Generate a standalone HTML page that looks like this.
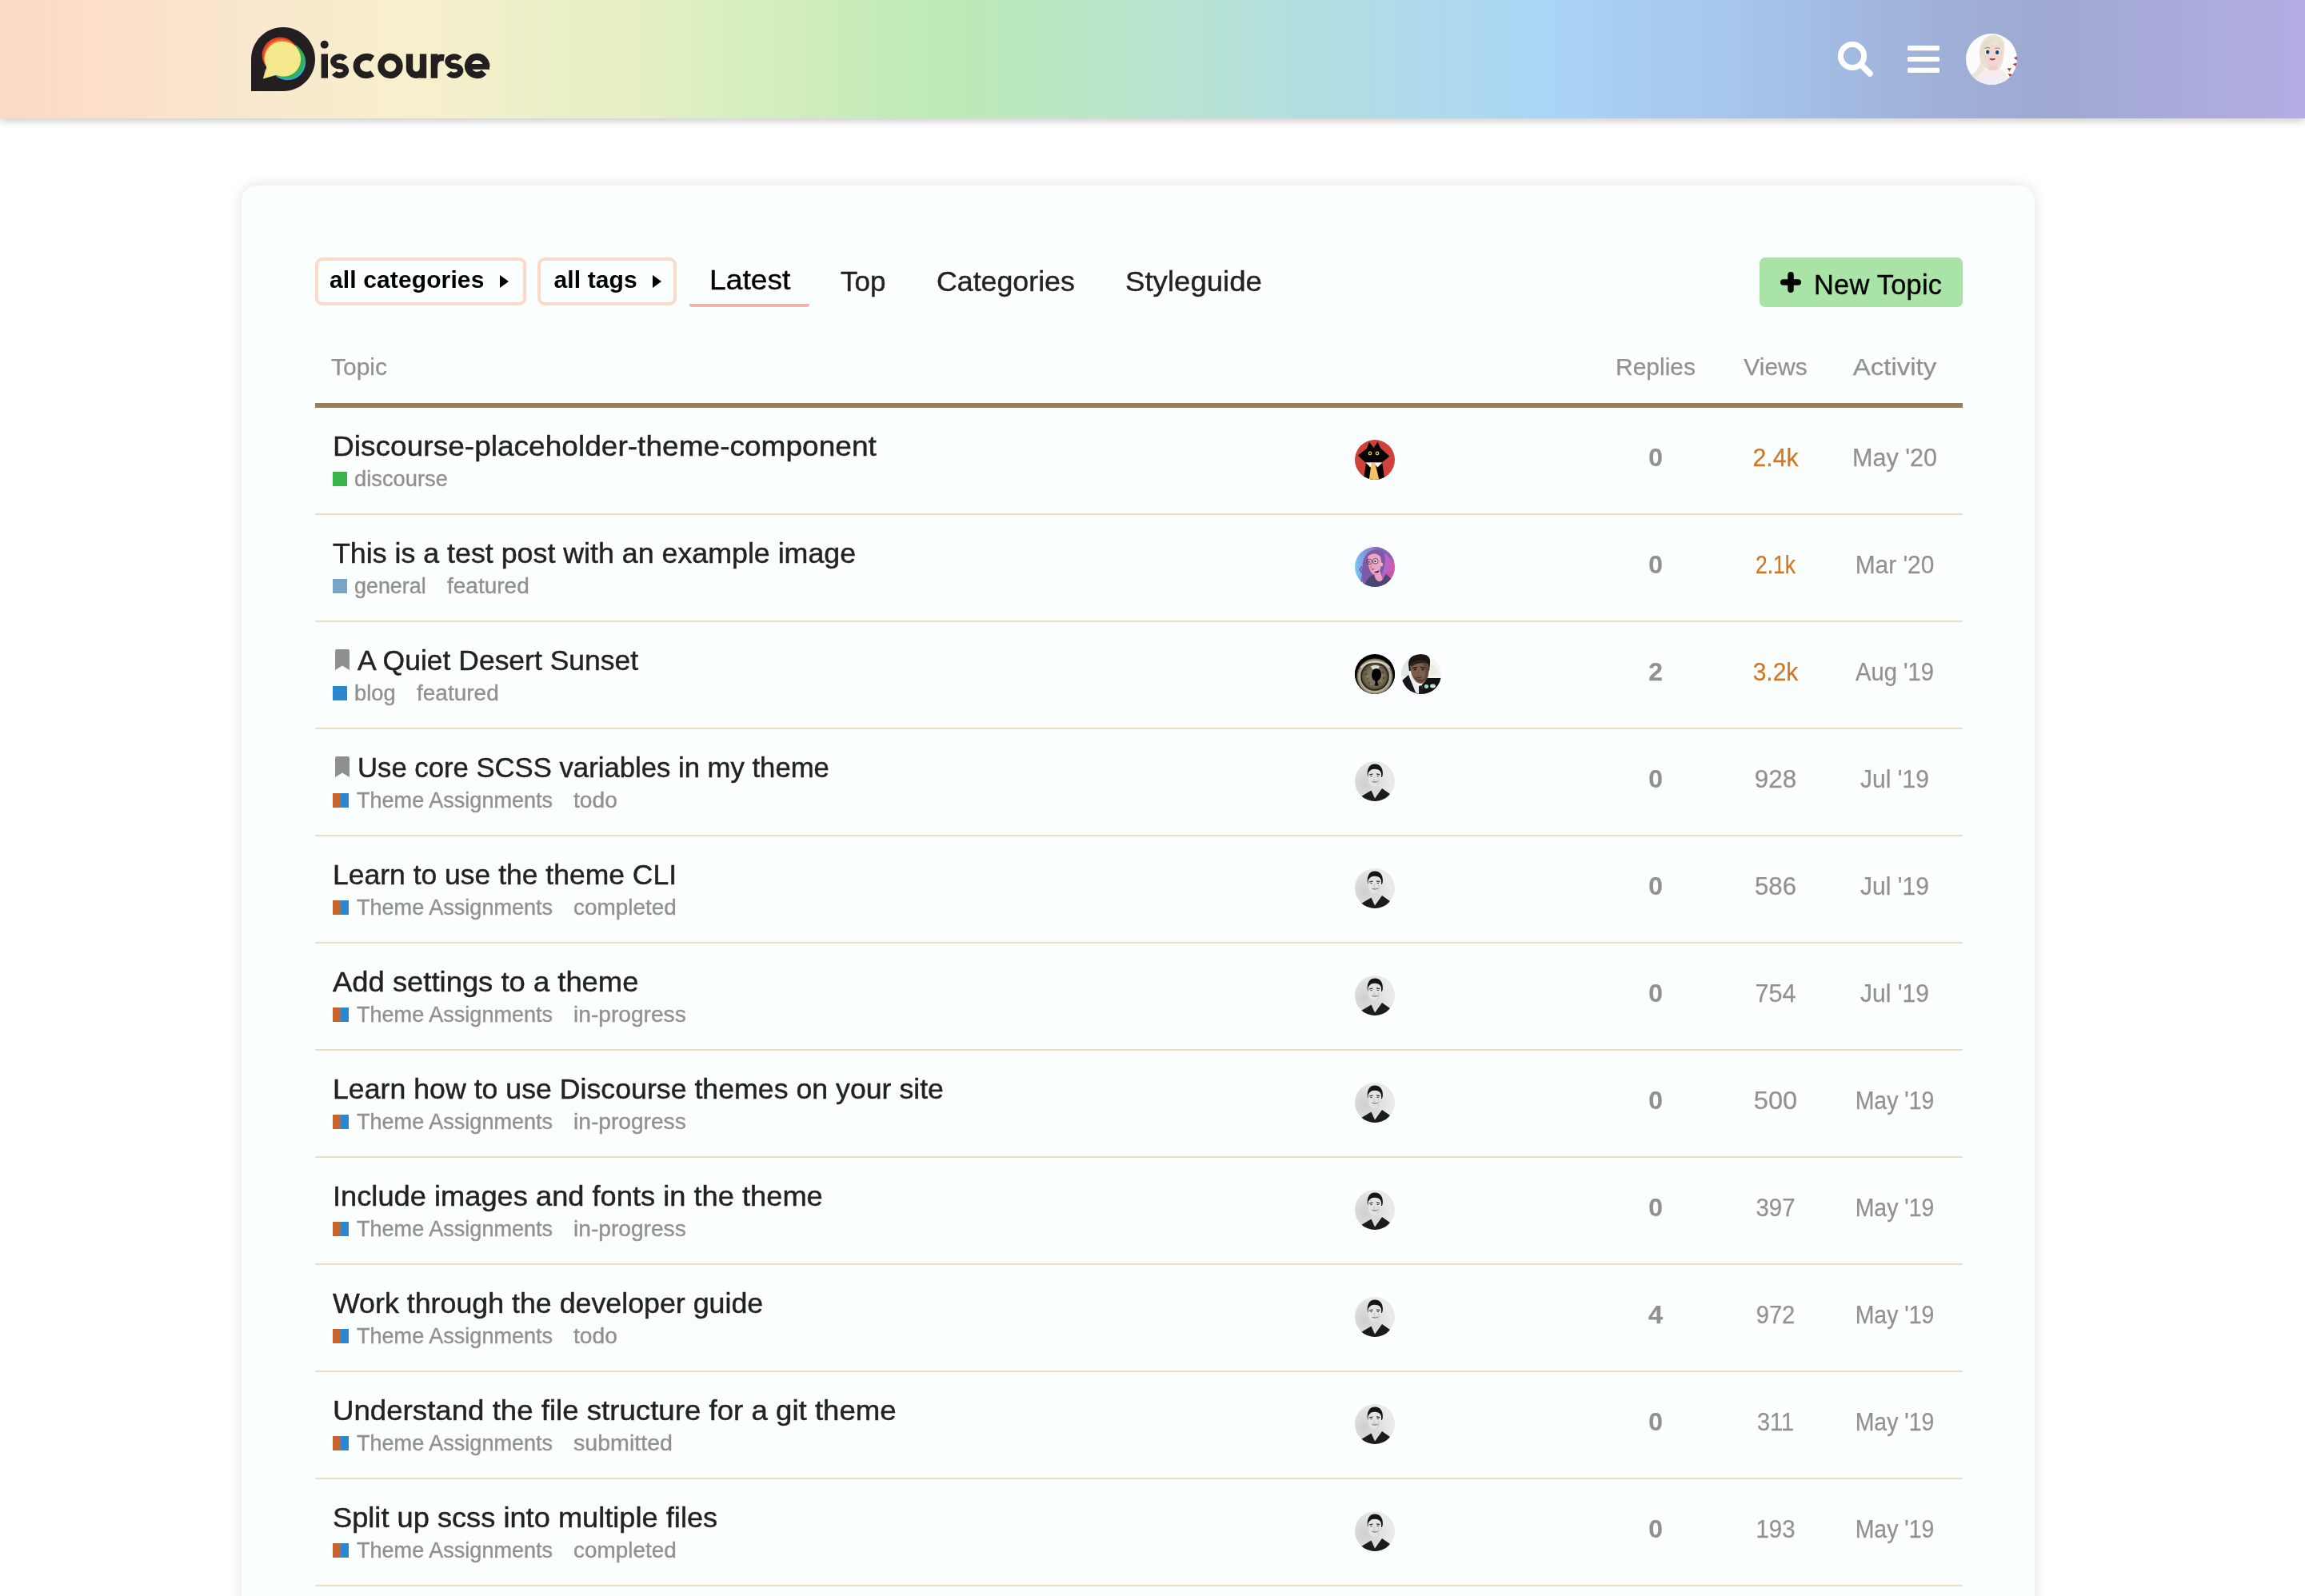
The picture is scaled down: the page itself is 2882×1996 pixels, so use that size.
<!DOCTYPE html>
<html lang="en">
<head>
<meta charset="utf-8">
<title>Discourse</title>
<style>
*{box-sizing:border-box;margin:0;padding:0}
html,body{width:2882px;height:1996px;overflow:hidden;background:#fff}
body{font-family:"Liberation Sans",sans-serif;color:#222;position:relative}
a{color:inherit;text-decoration:none}
.abs{position:absolute}
.row,nav,.th,header{will-change:transform}
/* ---------- header ---------- */
header{position:absolute;left:0;top:0;width:2882px;height:148px;z-index:5;
 background:linear-gradient(90deg,#fcd8c6 0%,#fae6cf 10%,#f7f0cc 18%,#e6f0c4 27%,#cfedba 35%,#bcebb6 41%,#b8e6cc 49%,#b2dde0 57%,#aad5f6 67%,#a5c4ea 76%,#9fb0d8 84%,#9fa8d1 89%,#b3ade3 100%);
 box-shadow:0 3px 10px rgba(0,0,0,.22)}
.logo{position:absolute;left:314px;top:34px;width:310px;height:80px}
.hicon{position:absolute}
/* ---------- card ---------- */
main{position:absolute;left:302px;top:232px;width:2242px;height:1800px;background:#fbfefe;border-radius:20px;
 box-shadow:0 0 18px rgba(0,0,0,.12)}
/* nav */
.pill{position:absolute;top:322px;height:60px;border:4px solid #fcdac7;border-radius:9px;
 font-weight:700;font-size:30px;line-height:52px;color:#000;white-space:nowrap}
.pill span{position:absolute;left:14px;top:-2px;letter-spacing:.12px}
.pill i{position:absolute;top:18px;width:0;height:0;border-left:11px solid #000;border-top:8.500px solid transparent;border-bottom:8.500px solid transparent}
.nav{position:absolute;font-size:35px;line-height:40px;color:#222;white-space:nowrap;transform-origin:0 50%;-webkit-text-stroke:.4px #222}
.uline{position:absolute;left:862px;top:380px;width:150px;height:4px;background:#eeb3ac;border-radius:0 0 3px 3px}
.btn{position:absolute;left:2200px;top:322px;width:254px;height:62px;border-radius:7px;background:#a9e3a6;color:#000;
 font-size:34.4px;line-height:40px;white-space:nowrap}
.btn span{position:absolute;left:68px;top:13.500px;letter-spacing:.25px;-webkit-text-stroke:.35px #000}
.btn svg{position:absolute;left:26px;top:18px}
/* table header */
.th{position:absolute;font-size:30px;line-height:34px;color:#919191;white-space:nowrap;-webkit-text-stroke:.25px #919191}
.th.c{transform:translateX(-50%)}
.rule{position:absolute;left:394px;top:504px;width:2060px;height:6px;background:#978056}
/* rows */
.row{position:absolute;left:394px;width:2060px;height:134px;border-bottom:2px solid #eae1c0}
.title{position:absolute;left:22px;top:26.500px;font-size:35px;line-height:42px;color:#222;white-space:nowrap;transform-origin:0 50%;-webkit-text-stroke:.45px #222}
.title.bm{left:53px}
.bmi{position:absolute;left:25px;top:34px}
.meta{position:absolute;left:22px;top:71.700px;height:34px;font-size:27px;line-height:34px;color:#919191;white-space:nowrap;-webkit-text-stroke:.4px #919191}
.sq{position:absolute;left:0;top:8.500px;width:18px;height:18px}
.sq2{position:absolute;left:0;top:8.500px;width:20px;height:18px;background:linear-gradient(90deg,#c8652f 0 50%,#2b87cf 50% 100%)}
.cat{position:absolute;top:0;transform-origin:0 50%}
.tag{position:absolute;top:0;transform-origin:0 50%}
.av{position:absolute;top:40px;width:50px;height:50px;border-radius:50%;overflow:hidden}
.num{position:absolute;top:38px;font-size:31px;line-height:50px;color:#919191;white-space:nowrap;transform:translateX(-50%);-webkit-text-stroke:.25px #919191}
.num.b{font-weight:700;left:1676px}
.num.v{left:1826px}
.num.a{left:1975px}
.hot{color:#cf7721;-webkit-text-stroke-color:#cf7721}
</style>
</head>
<body>
<header>
 <a class="logo" href="#">
  <svg width="310" height="80" viewBox="0 0 310 80">
   <path d="M0 40C0 17.900 17.900 0 40 0s40 17.900 40 40-17.900 40-40 40H0z" fill="#231f20"/>
   <circle cx="45.600" cy="43.700" r="22.600" fill="#27a9e1"/>
   <circle cx="44.200" cy="41.600" r="22.500" fill="#35b04a"/>
   <circle cx="36.300" cy="35.200" r="22.600" fill="#e8402a"/>
   <path d="M14.200 40l3.500 12-3 12.500 6-2z" fill="#e8402a"/>
   <circle cx="38.200" cy="37.400" r="22.200" fill="#f0772b"/>
   <path d="M40.200 17.900a21.900 21.900 0 0 1 3 43.600c-4 .5-8-.2-11.500-1.800L15 64.500l4.400-14.500A21.900 21.900 0 0 1 40.200 17.900z" fill="#f3e88b"/>
   <g fill="none" stroke="#231f20" stroke-width="8.400" aria-label="iscourse">
    <circle cx="91.700" cy="21.800" r="5" fill="#231f20" stroke="none"/>
    <path d="M91.800 33.500V63.700"/>
    <path id="ls" d="M117.54 39.90A7.9 5.80 0 1 0 110.70 48.60A7.9 5.80 0 1 1 103.86 57.30" stroke-width="7.400"/>
    <path d="M151.800 39.200A12.600 11.500 0 1 0 151.800 57.800"/>
    <circle cx="174" cy="48.500" r="11.500"/>
    <path d="M198 33.500V51.300A8.500 8.500 0 0 0 215 51.300M215 33.500V63.700"/>
    <path d="M228.900 33.500V63.700M228.900 50C228.900 41.500 233.500 37 241.200 38.300"/>
    <use href="#ls" x="143.200"/>
    <path d="M272 49.400H297.600" stroke-width="6.800"/>
    <path d="M293.60 51.86A11.5 11.5 0 1 0 291.15 56.20"/>
   </g>
  </svg>
 </a>
 <svg class="hicon" style="left:2296px;top:50px" width="48" height="48" viewBox="0 0 48 48">
  <circle cx="20" cy="20" r="14.600" fill="none" stroke="#fff" stroke-width="7"/>
  <path d="M31 31L42 42" stroke="#fff" stroke-width="7.500" stroke-linecap="round"/>
 </svg>
 <svg class="hicon" style="left:2385px;top:57px" width="40" height="34" viewBox="0 0 40 34">
  <rect x="0" y="0" width="40" height="6.200" rx="1.500" fill="#fff"/>
  <rect x="0" y="13.900" width="40" height="6.200" rx="1.500" fill="#fff"/>
  <rect x="0" y="27.800" width="40" height="6.200" rx="1.500" fill="#fff"/>
 </svg>
 <svg class="hicon" style="left:2458px;top:42px" width="64" height="64" viewBox="0 0 64 64">
  <defs><clipPath id="cu"><circle cx="32" cy="32" r="32"/></clipPath></defs>
  <g clip-path="url(#cu)">
   <rect width="64" height="64" fill="#fcfbfd"/>
   <path d="M17 27c-1-14 6-25 18-25 10 0 15 8 13 20l-2 14-4 8H24c-4-4-6-9-7-17z" fill="#e9e2d2"/>
   <path d="M19 34c1 6 3 10 6 13-4 4-10 8-18 10l-3-5c7-2 12-8 15-18z" fill="#ebe5d8"/>
   <path d="M22 23c3-8 11-11 20-8 3 4 4 10 3 15-1 6-5 11-11 12-6-1-11-7-12-19z" fill="#f2d6d2"/>
   <path d="M18 25c1-12 9-20 20-18-7 2-11 7-13 13-1 4-4 6-7 5z" fill="#e5dcc6"/>
   <path d="M38 7c6 1 10 7 9 15-2-6-5-11-9-15z" fill="#e5dcc6"/>
   <ellipse cx="26.800" cy="22.600" rx="3" ry="3.300" fill="#fff"/><ellipse cx="39.600" cy="23" rx="3" ry="3.300" fill="#fff"/>
   <ellipse cx="27.200" cy="23" rx="2.300" ry="2.700" fill="#2b6a86"/><ellipse cx="39.200" cy="23.400" rx="2.300" ry="2.700" fill="#2b6a86"/>
   <circle cx="27.200" cy="23.200" r="1.100" fill="#13232e"/><circle cx="39.200" cy="23.600" r="1.100" fill="#13232e"/>
   <path d="M23.500 18.500q3-2 6.500-.5M36.500 18.500q3-1.500 6 .5" stroke="#9a7b62" stroke-width="1" fill="none"/>
   <path d="M30 31.500q3 2.600 6.500 0q-3 .6-6.500 0z" fill="#a8384e" stroke="#a8384e" stroke-width="1.200" stroke-linejoin="round"/>
   <path d="M28 37l5 4 6-3 2 8-14 1z" fill="#eed0cc"/>
   <path d="M11 64c1-11 8-17 16-19l7 2 8-3c7 3 11 10 12 20z" fill="#f5eaee"/>
   <path d="M14 64c2-7 9-11 19-11s16 4 18 11z" fill="#efeef5"/>
   <path d="M60 30.500l4.500-2.500.5 6zM58.500 38l5.500-1.500-1.500 4.500zM51.500 43.500l5.500-.5-2.500 4zM52.500 50l6 1-3.500 3z" fill="#b23b26"/>
  </g>
 </svg>
</header>
<main></main>
<nav>
 <a class="pill" href="#" style="left:394px;width:264px"><span>all categories</span><i style="left:227px"></i></a>
 <a class="pill" href="#" style="left:672px;width:174px"><span style="left:16.500px">all tags</span><i style="left:140px"></i></a>
 <a class="nav active" href="#" style="left:887px;top:330px;color:#000;-webkit-text-stroke-color:#000;transform:scaleX(1.064)">Latest</a><span class="uline"></span>
 <a class="nav" href="#" style="left:1051px;top:332px">Top</a>
 <a class="nav" href="#" style="left:1171px;top:332px;transform:scaleX(1.021)">Categories</a>
 <a class="nav" href="#" style="left:1407px;top:332px;transform:scaleX(1.046)">Styleguide</a>
 <a class="btn" href="#"><svg width="26" height="26" viewBox="0 0 26 26"><path d="M13 3.750v18.500M3.750 13h18.500" stroke="#000" stroke-width="7.500" stroke-linecap="round"/></svg><span>New Topic</span></a>
</nav>
<div class="th" style="left:414px;top:442px">Topic</div>
<div class="th c" style="left:2070px;top:442px">Replies</div>
<div class="th c" style="left:2220px;top:442px">Views</div>
<div class="th c" style="left:2369px;top:442px;transform:translateX(-50%) scaleX(1.1)">Activity</div>
<div class="rule"></div>
<!--ROWS-START-->
<article class="row" style="top:510px">
<a class="title" href="#" style="transform:scaleX(1.059)">Discourse-placeholder-theme-component</a>
<div class="meta">
<span class="sq" style="background:#3ab54a"></span>
<span class="cat" style="left:27.4px;transform:scaleX(1.012)">discourse</span>
</div>
<span class="av" style="left:1300px"><svg width="50" height="50" viewBox="0 0 50 50"><rect width="50" height="50" fill="#cf4139"/><path d="M10.900 50L13.800 29.500h20.600L37.300 50z" fill="#050505"/><path d="M13.400 28.200h21l-6 6.400-4.400-5.200-4.300 5.400z" fill="#fff"/><path d="M20.800 29h4.400l5.200 21H17.800z" fill="#f5c363"/><path d="M3.800 19.400L15 10.800l2.900-8 5.800 7.200 4.700-7.600 3.600 7.800 11.300 10.600-9.300 7.400H13z" fill="#050505"/><circle cx="19" cy="16.900" r="2.300" fill="#f3cf5b"/><circle cx="28" cy="16.900" r="2.300" fill="#f3cf5b"/><circle cx="19" cy="16.900" r="1.100" fill="#050505"/><circle cx="28" cy="16.900" r="1.100" fill="#050505"/></svg></span>
<span class="num b" style="transform:translateX(-50%) scaleX(1.026)">0</span>
<span class="num v hot" style="transform:translateX(-50%) scaleX(0.976)">2.4k</span>
<span class="num a" style="transform:translateX(-50%) scaleX(0.985)">May '20</span>
</article>
<article class="row" style="top:644px">
<a class="title" href="#" style="transform:scaleX(1.022)">This is a test post with an example image</a>
<div class="meta">
<span class="sq" style="background:#7aa3c9"></span>
<span class="cat" style="left:27.4px;transform:scaleX(0.995)">general</span>
<span class="tag" style="left:142.5px;transform:scaleX(1.037)">featured</span>
</div>
<span class="av" style="left:1300px"><svg width="50" height="50" viewBox="0 0 50 50"><defs><linearGradient id="pg1" x1="0" y1="0" x2="1" y2="0"><stop offset="0" stop-color="#79c8f0"/><stop offset=".28" stop-color="#8093dc"/><stop offset=".55" stop-color="#9a72c4"/><stop offset=".8" stop-color="#b866c8"/><stop offset="1" stop-color="#d9559f"/></linearGradient></defs><rect width="50" height="50" fill="url(#pg1)"/><path d="M22 0h28v20c-8-9-17-16-28-20z" fill="#7a63b6" opacity=".85"/><path d="M36 34l14-6v22H30z" fill="#d2529e" opacity=".75"/><path d="M15 9c4-6 14-8 20-3 4 4 3 12 2 18l-5 18-20 8c-3-5-3-10-1-16-3-3-3-7-1-10-1-5 2-11 5-15z" fill="#7d5aa6"/><path d="M9 24l-3 4 4 6-2 10" stroke="#6d5fb0" stroke-width="1.600" fill="none"/><path d="M16.500 11.500c5-4 12-4 15.500 1 2 6 1 13-1.500 18l-8 3.500c-4-3-7-12-6-22.500z" fill="#eaa5c2"/><path d="M24 31l7-2.500c1 4 3 9 4 13l-9 3c-3-4-3.500-9-2-13.500z" fill="#ee9fc0"/><path d="M24 31.800l6.500-2.600-1.200 2.600q-2.500 1-5.300 0z" fill="#2a1830"/><path d="M12 50c1-8 5-13 12.500-15.500 0 5 3.500 9 7.500 9 3-2.500 5.500-6 6.500-9.500 4 2 7 6 8 10l-6 6z" fill="#4a4773"/><circle cx="18.300" cy="18.500" r="3.200" fill="none" stroke="#5a3458" stroke-width=".9"/><circle cx="25.800" cy="17.800" r="3.300" fill="#f1cfe2" stroke="#5a3458" stroke-width=".9"/><circle cx="25.400" cy="18" r="1.200" fill="#35304a"/><circle cx="17.800" cy="18.800" r="1" fill="#35304a"/><path d="M21 22.500l-1.300 3 2 .6" stroke="#c06a93" stroke-width=".8" fill="none"/><path d="M20.800 28q1.800.6 3.400-.4" stroke="#7a3050" stroke-width=".9" fill="none"/><ellipse cx="33.500" cy="22" rx="1.600" ry="2.400" fill="#f3b4cf"/></svg></span>
<span class="num b" style="transform:translateX(-50%) scaleX(1.026)">0</span>
<span class="num v hot" style="transform:translateX(-50%) scaleX(0.853)">2.1k</span>
<span class="num a" style="transform:translateX(-50%) scaleX(0.963)">Mar '20</span>
</article>
<article class="row" style="top:778px">
<svg class="bmi" width="18" height="26" viewBox="0 0 18 26"><path d="M0 26V2.400A2.400 2.400 0 0 1 2.400 0h13.200A2.400 2.400 0 0 1 18 2.400V26l-9-5.600z" fill="#8f8f8f"/></svg>
<a class="title bm" href="#" style="transform:scaleX(1.014)">A Quiet Desert Sunset</a>
<div class="meta">
<span class="sq" style="background:#2b87cf"></span>
<span class="cat" style="left:27.4px;transform:scaleX(1.011)">blog</span>
<span class="tag" style="left:104.5px;transform:scaleX(1.037)">featured</span>
</div>
<span class="av" style="left:1300px"><svg width="50" height="50" viewBox="0 0 50 50"><defs><radialGradient id="eg2" cx=".5" cy=".53" r=".5"><stop offset="0" stop-color="#8e866f"/><stop offset=".4" stop-color="#787059"/><stop offset=".6" stop-color="#5c5542"/><stop offset=".67" stop-color="#1a140b"/><stop offset=".73" stop-color="#bdb7a3"/><stop offset=".8" stop-color="#a39c86"/><stop offset=".86" stop-color="#6d6652"/><stop offset=".9" stop-color="#0a0805"/><stop offset="1" stop-color="#000"/></radialGradient></defs><rect width="50" height="50" fill="#000"/><circle cx="25" cy="26.500" r="25.500" fill="url(#eg2)"/><path d="M7.500 17c7-9 28-10 36 0" stroke="#dcd8cb" stroke-width="2.400" fill="none" opacity=".8"/><path d="M20 15.500c3-2 8-2 11 0l-2 3.500h-7z" fill="#ecebe4" opacity=".9"/><g fill="#3d3424" opacity=".55"><circle cx="14" cy="25" r="1.300"/><circle cx="16" cy="31" r="1.100"/><circle cx="35" cy="23" r="1.200"/><circle cx="36" cy="30" r="1.300"/><circle cx="31" cy="36" r="1.100"/><circle cx="18" cy="36" r="1.200"/><circle cx="13" cy="20" r="1"/></g><g fill="#b9ad8a" opacity=".5"><circle cx="15.500" cy="28" r="1"/><circle cx="34" cy="27" r="1"/><circle cx="33" cy="34" r=".9"/><circle cx="20" cy="38" r=".9"/><circle cx="37" cy="26" r=".8"/></g><path d="M27 18c3.800 0 6.500 3.600 6 8.400-.4 4.200-3.300 5.600-4.700 7.900l1.300 5.200h-4.800l.8-5.200c-2.900-1.800-4.800-4.700-4.500-8.400.3-4.700 2.500-7.900 5.900-7.900z" fill="#020202"/></svg></span>
<span class="av" style="left:1358px"><svg width="50" height="50" viewBox="0 0 50 50"><rect width="50" height="50" fill="#f5f5f1"/><rect x="0" y="6" width="10" height="22" fill="#e5e5e8"/><path d="M36 12c6 1 10 6 11 12l-10 4z" fill="#ecece6"/><path d="M30 30h20v20H30z" fill="#101415"/><path d="M9 13c0-9 6-13 15-13 8 0 13 3 12 12l-1 9H10z" fill="#1a1613"/><path d="M11.500 14c2-4 7.500-6 13.500-5.500 6 .2 9.500 3 9.500 9 0 8-2 14.500-6.500 18.500-3 2-8 1-11-3-4-5-6-12-5.500-19z" fill="#7d5e4e"/><path d="M11.500 14c2-4 7.500-6 13.500-5.500 4 .2 7 1.500 8.500 4-6-2-15-2-20 3z" fill="#2a211c"/><path d="M14 17.500l6-1M24 16.500l6 .7" stroke="#2c201a" stroke-width="1.300"/><ellipse cx="17.300" cy="19.500" rx="1.800" ry=".9" fill="#2a1d17"/><ellipse cx="27" cy="19.500" rx="1.800" ry=".9" fill="#2a1d17"/><path d="M28 12c5 3 6 12 2 21" stroke="#4d382d" stroke-width="4" fill="none" opacity=".6"/><path d="M22 20l-1.500 6 3 .8" stroke="#6e5140" stroke-width="1" fill="none"/><path d="M15 26c2 6 6 9 9 9 3 0 5-2 6.500-5-2 1-4 1.500-7 1.500s-6-2-8.500-5.500z" fill="#5b4335"/><path d="M19 29q3 1.200 6.500 0" stroke="#3d2a20" stroke-width="1" fill="none"/><path d="M0 34l9-8 11 14 4 10H0z" fill="#14161a"/><path d="M9 26l5 4 10 12-2 8-4-2z" fill="#e9eaf2"/><path d="M22 40l4-1 2 11h-6z" fill="#1a1c22"/><path d="M26 38l6-6 8 3 10-2v17H27z" fill="#111315"/><ellipse cx="31.500" cy="40.500" rx="2.600" ry="2.400" fill="#9fd9cc"/><ellipse cx="39.500" cy="40" rx="3.400" ry="2.400" fill="#bfe9de"/></svg></span>
<span class="num b" style="transform:translateX(-50%) scaleX(1.026)">2</span>
<span class="num v hot" style="transform:translateX(-50%) scaleX(0.966)">3.2k</span>
<span class="num a" style="transform:translateX(-50%) scaleX(0.941)">Aug '19</span>
</article>
<article class="row" style="top:912px">
<svg class="bmi" width="18" height="26" viewBox="0 0 18 26"><path d="M0 26V2.400A2.400 2.400 0 0 1 2.400 0h13.200A2.400 2.400 0 0 1 18 2.400V26l-9-5.600z" fill="#8f8f8f"/></svg>
<a class="title bm" href="#" style="transform:scaleX(0.991)">Use core SCSS variables in my theme</a>
<div class="meta">
<span class="sq2"></span>
<span class="cat" style="left:30.4px;transform:scaleX(1.002)">Theme Assignments</span>
<span class="tag" style="left:300.9px;transform:scaleX(1.043)">todo</span>
</div>
<span class="av" style="left:1300px"><svg width="50" height="50" viewBox="0 0 50 50"><defs><radialGradient id="mg3" cx=".25" cy=".58" r=".62"><stop offset="0" stop-color="#cfcfd1"/><stop offset="1" stop-color="#e9e9ea"/></radialGradient></defs><rect width="50" height="50" fill="url(#mg3)"/><path d="M15.900 18.500c-1.200-9 2.400-15 9.100-15 7 0 10.800 5.500 9.700 14.500l-1 2-16.800-.3z" fill="#151515"/><path d="M16.800 14.500c2-4 5.500-5.200 8.700-4.800 4 .3 7 2 7.500 6 .5 6-1 12-4 15.500-2 2-5.500 2.500-8 .5-3.500-3.500-5.200-10.200-4.200-17.200z" fill="#e3e3e3"/><path d="M18.300 16.900l4.300-.9M27 15.900l4.200.7" stroke="#2c2c2c" stroke-width="1.200"/><ellipse cx="20.600" cy="18.600" rx="1.400" ry=".7" fill="#444"/><ellipse cx="28.800" cy="18.400" rx="1.400" ry=".7" fill="#444"/><path d="M24.600 19.500l-.8 4 2 .4" stroke="#bdbdbd" stroke-width=".9" fill="none"/><path d="M21.300 25.300q3.700 2.600 8-.3q-3.800 1-8 .3z" fill="#9a9a9a" stroke="#8a8a8a" stroke-width=".7"/><path d="M29 21q3 4-1 9" stroke="#cfcfcf" stroke-width="1.400" fill="none"/><path d="M21 30c2 2 5 2 7.500-.5l2.500 6-6 8-6.500-8z" fill="#dadada"/><path d="M8 44l12.500-7.500 4.500 10 9-12.500 10 7-6 7-13 3-12-3z" fill="#1c1c1c"/></svg></span>
<span class="num b" style="transform:translateX(-50%) scaleX(1.026)">0</span>
<span class="num v" style="transform:translateX(-50%) scaleX(1.017)">928</span>
<span class="num a" style="transform:translateX(-50%) scaleX(0.97)">Jul '19</span>
</article>
<article class="row" style="top:1046px">
<a class="title" href="#" style="transform:scaleX(1.014)">Learn to use the theme CLI</a>
<div class="meta">
<span class="sq2"></span>
<span class="cat" style="left:30.4px;transform:scaleX(1.002)">Theme Assignments</span>
<span class="tag" style="left:300.9px;transform:scaleX(1.033)">completed</span>
</div>
<span class="av" style="left:1300px"><svg width="50" height="50" viewBox="0 0 50 50"><defs><radialGradient id="mg4" cx=".25" cy=".58" r=".62"><stop offset="0" stop-color="#cfcfd1"/><stop offset="1" stop-color="#e9e9ea"/></radialGradient></defs><rect width="50" height="50" fill="url(#mg4)"/><path d="M15.900 18.500c-1.200-9 2.400-15 9.100-15 7 0 10.800 5.500 9.700 14.500l-1 2-16.800-.3z" fill="#151515"/><path d="M16.800 14.500c2-4 5.500-5.200 8.700-4.800 4 .3 7 2 7.500 6 .5 6-1 12-4 15.500-2 2-5.500 2.500-8 .5-3.500-3.500-5.200-10.200-4.200-17.200z" fill="#e3e3e3"/><path d="M18.300 16.900l4.300-.9M27 15.900l4.200.7" stroke="#2c2c2c" stroke-width="1.200"/><ellipse cx="20.600" cy="18.600" rx="1.400" ry=".7" fill="#444"/><ellipse cx="28.800" cy="18.400" rx="1.400" ry=".7" fill="#444"/><path d="M24.600 19.500l-.8 4 2 .4" stroke="#bdbdbd" stroke-width=".9" fill="none"/><path d="M21.300 25.300q3.700 2.600 8-.3q-3.800 1-8 .3z" fill="#9a9a9a" stroke="#8a8a8a" stroke-width=".7"/><path d="M29 21q3 4-1 9" stroke="#cfcfcf" stroke-width="1.400" fill="none"/><path d="M21 30c2 2 5 2 7.500-.5l2.500 6-6 8-6.500-8z" fill="#dadada"/><path d="M8 44l12.500-7.500 4.500 10 9-12.500 10 7-6 7-13 3-12-3z" fill="#1c1c1c"/></svg></span>
<span class="num b" style="transform:translateX(-50%) scaleX(1.026)">0</span>
<span class="num v" style="transform:translateX(-50%) scaleX(1.005)">586</span>
<span class="num a" style="transform:translateX(-50%) scaleX(0.97)">Jul '19</span>
</article>
<article class="row" style="top:1180px">
<a class="title" href="#" style="transform:scaleX(1.04)">Add settings to a theme</a>
<div class="meta">
<span class="sq2"></span>
<span class="cat" style="left:30.4px;transform:scaleX(1.002)">Theme Assignments</span>
<span class="tag" style="left:300.9px;transform:scaleX(1.042)">in-progress</span>
</div>
<span class="av" style="left:1300px"><svg width="50" height="50" viewBox="0 0 50 50"><defs><radialGradient id="mg5" cx=".25" cy=".58" r=".62"><stop offset="0" stop-color="#cfcfd1"/><stop offset="1" stop-color="#e9e9ea"/></radialGradient></defs><rect width="50" height="50" fill="url(#mg5)"/><path d="M15.900 18.500c-1.200-9 2.400-15 9.100-15 7 0 10.800 5.500 9.700 14.500l-1 2-16.800-.3z" fill="#151515"/><path d="M16.800 14.500c2-4 5.500-5.200 8.700-4.800 4 .3 7 2 7.500 6 .5 6-1 12-4 15.500-2 2-5.500 2.500-8 .5-3.500-3.500-5.200-10.200-4.200-17.200z" fill="#e3e3e3"/><path d="M18.300 16.900l4.300-.9M27 15.900l4.200.7" stroke="#2c2c2c" stroke-width="1.200"/><ellipse cx="20.600" cy="18.600" rx="1.400" ry=".7" fill="#444"/><ellipse cx="28.800" cy="18.400" rx="1.400" ry=".7" fill="#444"/><path d="M24.600 19.500l-.8 4 2 .4" stroke="#bdbdbd" stroke-width=".9" fill="none"/><path d="M21.300 25.300q3.700 2.600 8-.3q-3.800 1-8 .3z" fill="#9a9a9a" stroke="#8a8a8a" stroke-width=".7"/><path d="M29 21q3 4-1 9" stroke="#cfcfcf" stroke-width="1.400" fill="none"/><path d="M21 30c2 2 5 2 7.500-.5l2.500 6-6 8-6.500-8z" fill="#dadada"/><path d="M8 44l12.500-7.500 4.500 10 9-12.500 10 7-6 7-13 3-12-3z" fill="#1c1c1c"/></svg></span>
<span class="num b" style="transform:translateX(-50%) scaleX(1.026)">0</span>
<span class="num v" style="transform:translateX(-50%) scaleX(0.986)">754</span>
<span class="num a" style="transform:translateX(-50%) scaleX(0.97)">Jul '19</span>
</article>
<article class="row" style="top:1314px">
<a class="title" href="#" style="transform:scaleX(1.02)">Learn how to use Discourse themes on your site</a>
<div class="meta">
<span class="sq2"></span>
<span class="cat" style="left:30.4px;transform:scaleX(1.002)">Theme Assignments</span>
<span class="tag" style="left:300.9px;transform:scaleX(1.042)">in-progress</span>
</div>
<span class="av" style="left:1300px"><svg width="50" height="50" viewBox="0 0 50 50"><defs><radialGradient id="mg6" cx=".25" cy=".58" r=".62"><stop offset="0" stop-color="#cfcfd1"/><stop offset="1" stop-color="#e9e9ea"/></radialGradient></defs><rect width="50" height="50" fill="url(#mg6)"/><path d="M15.900 18.500c-1.200-9 2.400-15 9.100-15 7 0 10.800 5.500 9.700 14.500l-1 2-16.800-.3z" fill="#151515"/><path d="M16.800 14.500c2-4 5.500-5.200 8.700-4.800 4 .3 7 2 7.500 6 .5 6-1 12-4 15.500-2 2-5.500 2.500-8 .5-3.500-3.500-5.200-10.200-4.200-17.200z" fill="#e3e3e3"/><path d="M18.300 16.900l4.300-.9M27 15.900l4.200.7" stroke="#2c2c2c" stroke-width="1.200"/><ellipse cx="20.600" cy="18.600" rx="1.400" ry=".7" fill="#444"/><ellipse cx="28.800" cy="18.400" rx="1.400" ry=".7" fill="#444"/><path d="M24.600 19.500l-.8 4 2 .4" stroke="#bdbdbd" stroke-width=".9" fill="none"/><path d="M21.300 25.300q3.700 2.600 8-.3q-3.800 1-8 .3z" fill="#9a9a9a" stroke="#8a8a8a" stroke-width=".7"/><path d="M29 21q3 4-1 9" stroke="#cfcfcf" stroke-width="1.400" fill="none"/><path d="M21 30c2 2 5 2 7.500-.5l2.500 6-6 8-6.500-8z" fill="#dadada"/><path d="M8 44l12.500-7.500 4.500 10 9-12.500 10 7-6 7-13 3-12-3z" fill="#1c1c1c"/></svg></span>
<span class="num b" style="transform:translateX(-50%) scaleX(1.026)">0</span>
<span class="num v" style="transform:translateX(-50%) scaleX(1.053)">500</span>
<span class="num a" style="transform:translateX(-50%) scaleX(0.917)">May '19</span>
</article>
<article class="row" style="top:1448px">
<a class="title" href="#" style="transform:scaleX(1.036)">Include images and fonts in the theme</a>
<div class="meta">
<span class="sq2"></span>
<span class="cat" style="left:30.4px;transform:scaleX(1.002)">Theme Assignments</span>
<span class="tag" style="left:300.9px;transform:scaleX(1.042)">in-progress</span>
</div>
<span class="av" style="left:1300px"><svg width="50" height="50" viewBox="0 0 50 50"><defs><radialGradient id="mg7" cx=".25" cy=".58" r=".62"><stop offset="0" stop-color="#cfcfd1"/><stop offset="1" stop-color="#e9e9ea"/></radialGradient></defs><rect width="50" height="50" fill="url(#mg7)"/><path d="M15.900 18.500c-1.200-9 2.400-15 9.100-15 7 0 10.800 5.500 9.700 14.500l-1 2-16.800-.3z" fill="#151515"/><path d="M16.800 14.500c2-4 5.500-5.200 8.700-4.800 4 .3 7 2 7.500 6 .5 6-1 12-4 15.500-2 2-5.500 2.500-8 .5-3.500-3.500-5.200-10.200-4.200-17.200z" fill="#e3e3e3"/><path d="M18.300 16.900l4.300-.9M27 15.900l4.200.7" stroke="#2c2c2c" stroke-width="1.200"/><ellipse cx="20.600" cy="18.600" rx="1.400" ry=".7" fill="#444"/><ellipse cx="28.800" cy="18.400" rx="1.400" ry=".7" fill="#444"/><path d="M24.600 19.500l-.8 4 2 .4" stroke="#bdbdbd" stroke-width=".9" fill="none"/><path d="M21.300 25.300q3.700 2.600 8-.3q-3.800 1-8 .3z" fill="#9a9a9a" stroke="#8a8a8a" stroke-width=".7"/><path d="M29 21q3 4-1 9" stroke="#cfcfcf" stroke-width="1.400" fill="none"/><path d="M21 30c2 2 5 2 7.500-.5l2.500 6-6 8-6.500-8z" fill="#dadada"/><path d="M8 44l12.500-7.500 4.500 10 9-12.500 10 7-6 7-13 3-12-3z" fill="#1c1c1c"/></svg></span>
<span class="num b" style="transform:translateX(-50%) scaleX(1.026)">0</span>
<span class="num v" style="transform:translateX(-50%) scaleX(0.951)">397</span>
<span class="num a" style="transform:translateX(-50%) scaleX(0.917)">May '19</span>
</article>
<article class="row" style="top:1582px">
<a class="title" href="#" style="transform:scaleX(1.022)">Work through the developer guide</a>
<div class="meta">
<span class="sq2"></span>
<span class="cat" style="left:30.4px;transform:scaleX(1.002)">Theme Assignments</span>
<span class="tag" style="left:300.9px;transform:scaleX(1.043)">todo</span>
</div>
<span class="av" style="left:1300px"><svg width="50" height="50" viewBox="0 0 50 50"><defs><radialGradient id="mg8" cx=".25" cy=".58" r=".62"><stop offset="0" stop-color="#cfcfd1"/><stop offset="1" stop-color="#e9e9ea"/></radialGradient></defs><rect width="50" height="50" fill="url(#mg8)"/><path d="M15.900 18.500c-1.200-9 2.400-15 9.100-15 7 0 10.800 5.500 9.700 14.500l-1 2-16.800-.3z" fill="#151515"/><path d="M16.800 14.500c2-4 5.500-5.200 8.700-4.800 4 .3 7 2 7.500 6 .5 6-1 12-4 15.500-2 2-5.500 2.500-8 .5-3.500-3.500-5.200-10.200-4.200-17.200z" fill="#e3e3e3"/><path d="M18.300 16.900l4.300-.9M27 15.900l4.200.7" stroke="#2c2c2c" stroke-width="1.200"/><ellipse cx="20.600" cy="18.600" rx="1.400" ry=".7" fill="#444"/><ellipse cx="28.800" cy="18.400" rx="1.400" ry=".7" fill="#444"/><path d="M24.600 19.500l-.8 4 2 .4" stroke="#bdbdbd" stroke-width=".9" fill="none"/><path d="M21.300 25.300q3.700 2.600 8-.3q-3.800 1-8 .3z" fill="#9a9a9a" stroke="#8a8a8a" stroke-width=".7"/><path d="M29 21q3 4-1 9" stroke="#cfcfcf" stroke-width="1.400" fill="none"/><path d="M21 30c2 2 5 2 7.500-.5l2.500 6-6 8-6.500-8z" fill="#dadada"/><path d="M8 44l12.500-7.500 4.500 10 9-12.500 10 7-6 7-13 3-12-3z" fill="#1c1c1c"/></svg></span>
<span class="num b" style="transform:translateX(-50%) scaleX(1.055)">4</span>
<span class="num v" style="transform:translateX(-50%) scaleX(0.941)">972</span>
<span class="num a" style="transform:translateX(-50%) scaleX(0.917)">May '19</span>
</article>
<article class="row" style="top:1716px">
<a class="title" href="#" style="transform:scaleX(1.047)">Understand the file structure for a git theme</a>
<div class="meta">
<span class="sq2"></span>
<span class="cat" style="left:30.4px;transform:scaleX(1.002)">Theme Assignments</span>
<span class="tag" style="left:300.9px;transform:scaleX(1.059)">submitted</span>
</div>
<span class="av" style="left:1300px"><svg width="50" height="50" viewBox="0 0 50 50"><defs><radialGradient id="mg9" cx=".25" cy=".58" r=".62"><stop offset="0" stop-color="#cfcfd1"/><stop offset="1" stop-color="#e9e9ea"/></radialGradient></defs><rect width="50" height="50" fill="url(#mg9)"/><path d="M15.900 18.500c-1.200-9 2.400-15 9.100-15 7 0 10.800 5.500 9.700 14.500l-1 2-16.800-.3z" fill="#151515"/><path d="M16.800 14.500c2-4 5.500-5.200 8.700-4.800 4 .3 7 2 7.500 6 .5 6-1 12-4 15.500-2 2-5.500 2.500-8 .5-3.500-3.500-5.200-10.200-4.200-17.200z" fill="#e3e3e3"/><path d="M18.300 16.900l4.300-.9M27 15.900l4.200.7" stroke="#2c2c2c" stroke-width="1.200"/><ellipse cx="20.600" cy="18.600" rx="1.400" ry=".7" fill="#444"/><ellipse cx="28.800" cy="18.400" rx="1.400" ry=".7" fill="#444"/><path d="M24.600 19.500l-.8 4 2 .4" stroke="#bdbdbd" stroke-width=".9" fill="none"/><path d="M21.300 25.300q3.700 2.600 8-.3q-3.800 1-8 .3z" fill="#9a9a9a" stroke="#8a8a8a" stroke-width=".7"/><path d="M29 21q3 4-1 9" stroke="#cfcfcf" stroke-width="1.400" fill="none"/><path d="M21 30c2 2 5 2 7.500-.5l2.500 6-6 8-6.500-8z" fill="#dadada"/><path d="M8 44l12.500-7.500 4.500 10 9-12.500 10 7-6 7-13 3-12-3z" fill="#1c1c1c"/></svg></span>
<span class="num b" style="transform:translateX(-50%) scaleX(1.026)">0</span>
<span class="num v" style="transform:translateX(-50%) scaleX(0.931)">311</span>
<span class="num a" style="transform:translateX(-50%) scaleX(0.917)">May '19</span>
</article>
<article class="row" style="top:1850px">
<a class="title" href="#" style="transform:scaleX(1.035)">Split up scss into multiple files</a>
<div class="meta">
<span class="sq2"></span>
<span class="cat" style="left:30.4px;transform:scaleX(1.002)">Theme Assignments</span>
<span class="tag" style="left:300.9px;transform:scaleX(1.033)">completed</span>
</div>
<span class="av" style="left:1300px"><svg width="50" height="50" viewBox="0 0 50 50"><defs><radialGradient id="mg10" cx=".25" cy=".58" r=".62"><stop offset="0" stop-color="#cfcfd1"/><stop offset="1" stop-color="#e9e9ea"/></radialGradient></defs><rect width="50" height="50" fill="url(#mg10)"/><path d="M15.900 18.500c-1.200-9 2.400-15 9.100-15 7 0 10.800 5.500 9.700 14.500l-1 2-16.800-.3z" fill="#151515"/><path d="M16.800 14.500c2-4 5.500-5.200 8.700-4.800 4 .3 7 2 7.500 6 .5 6-1 12-4 15.500-2 2-5.500 2.500-8 .5-3.500-3.500-5.200-10.200-4.200-17.200z" fill="#e3e3e3"/><path d="M18.300 16.900l4.300-.9M27 15.900l4.200.7" stroke="#2c2c2c" stroke-width="1.200"/><ellipse cx="20.600" cy="18.600" rx="1.400" ry=".7" fill="#444"/><ellipse cx="28.800" cy="18.400" rx="1.400" ry=".7" fill="#444"/><path d="M24.600 19.500l-.8 4 2 .4" stroke="#bdbdbd" stroke-width=".9" fill="none"/><path d="M21.300 25.300q3.700 2.600 8-.3q-3.800 1-8 .3z" fill="#9a9a9a" stroke="#8a8a8a" stroke-width=".7"/><path d="M29 21q3 4-1 9" stroke="#cfcfcf" stroke-width="1.400" fill="none"/><path d="M21 30c2 2 5 2 7.500-.5l2.500 6-6 8-6.500-8z" fill="#dadada"/><path d="M8 44l12.500-7.500 4.500 10 9-12.500 10 7-6 7-13 3-12-3z" fill="#1c1c1c"/></svg></span>
<span class="num b" style="transform:translateX(-50%) scaleX(1.026)">0</span>
<span class="num v" style="transform:translateX(-50%) scaleX(0.947)">193</span>
<span class="num a" style="transform:translateX(-50%) scaleX(0.917)">May '19</span>
</article>
<!--ROWS-END-->
</body>
</html>
